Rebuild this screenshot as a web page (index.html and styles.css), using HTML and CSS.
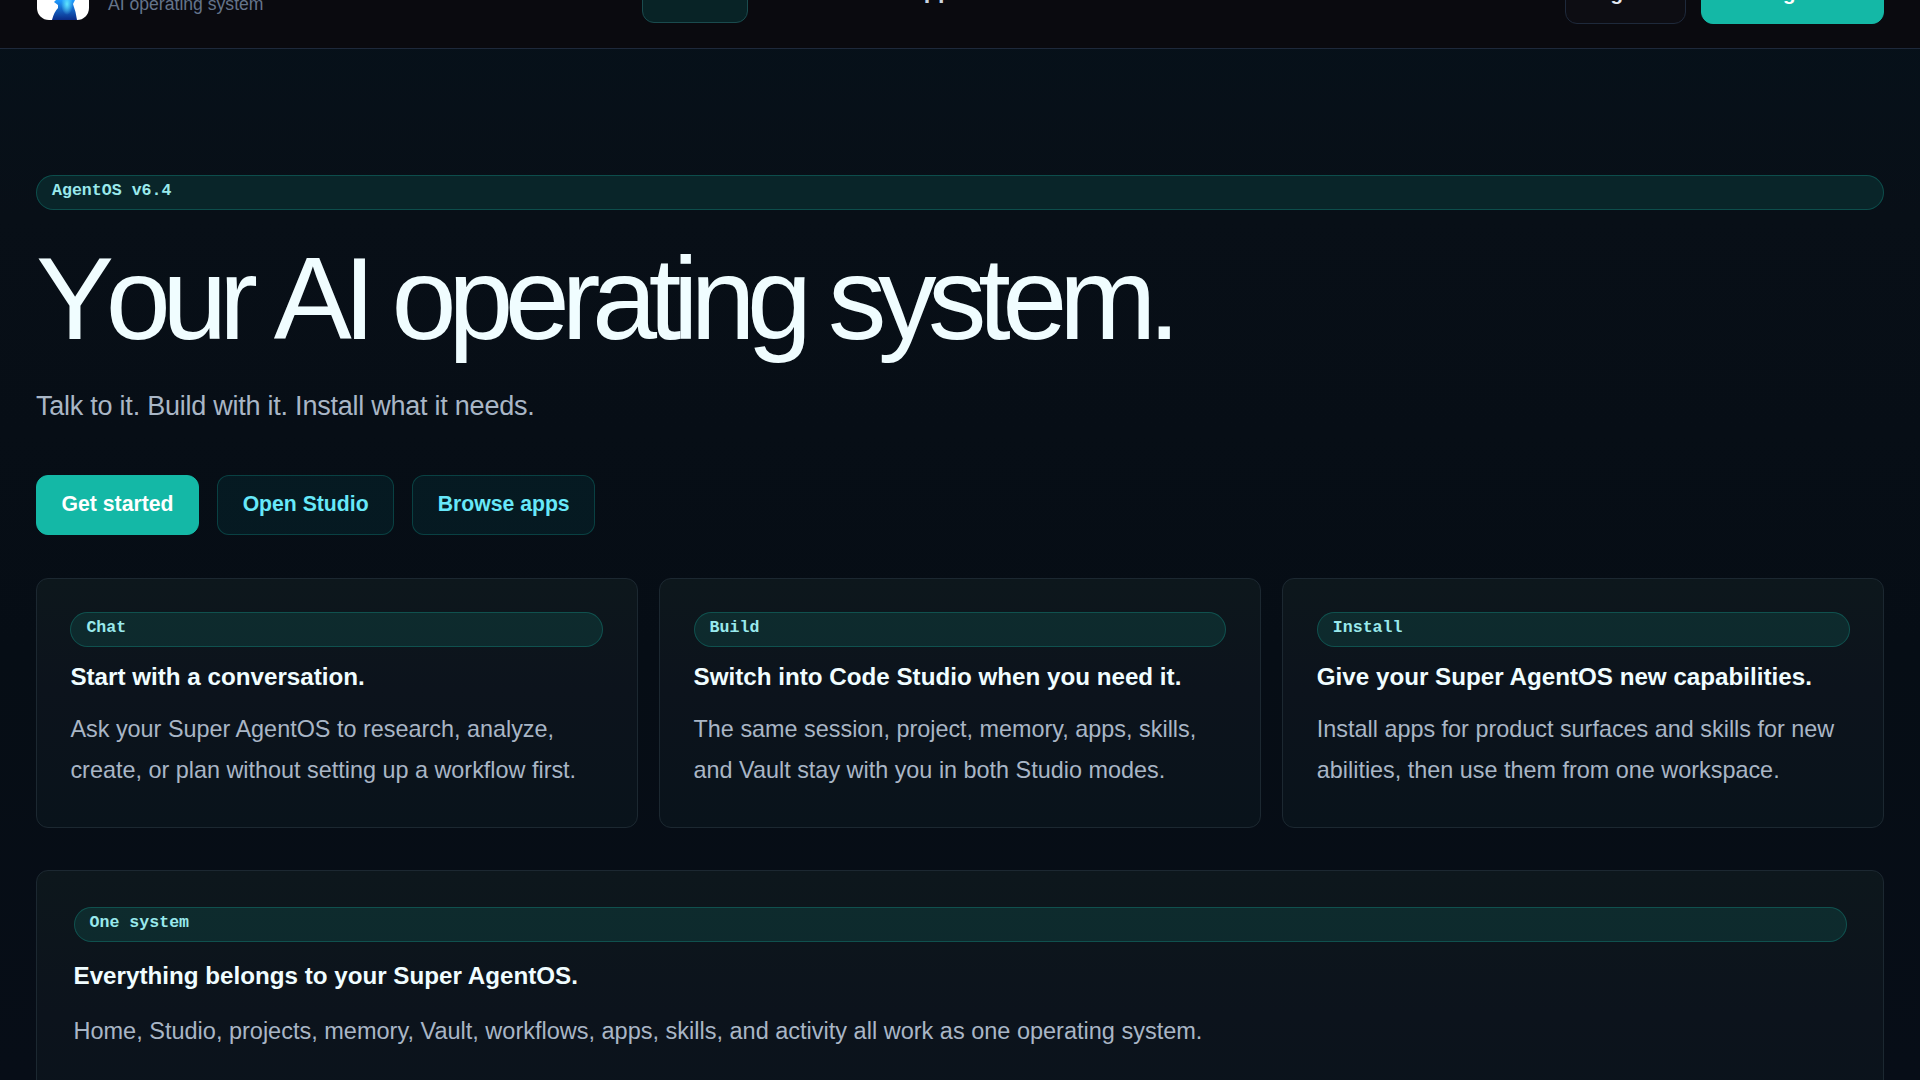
FILE: index.html
```html
<!DOCTYPE html>
<html lang="en">
<head>
  <meta charset="UTF-8">
  <meta name="viewport" content="width=device-width, initial-scale=1.0">
  <title>AgentOS</title>
  <link rel="stylesheet" href="styles.css">
</head>
<body>
  <header class="nav">
    <a class="brand" href="#">
      <svg class="brand-logo" viewBox="0 0 52 52">
        <defs>
          <linearGradient id="body" x1="0" y1="0" x2="0" y2="1">
            <stop offset="0.55" stop-color="#1e9bff"/>
            <stop offset="1" stop-color="#0a2a86"/>
          </linearGradient>
          <radialGradient id="glow" cx="0.5" cy="0.5" r="0.5">
            <stop offset="0" stop-color="#5fe6ff"/>
            <stop offset="1" stop-color="#5fe6ff" stop-opacity="0"/>
          </radialGradient>
        </defs>
        <rect width="52" height="52" fill="#fff"/>
        <path d="M18 8h20v24l-2 4q3 8 4 16H15q2-8 6-12v-3l-4-3 3-3z" fill="url(#body)"/>
        <ellipse cx="30" cy="36" rx="6" ry="11" fill="url(#glow)"/>
      </svg>
      <span class="brand-text">
        <small>AI operating system</small>
      </span>
    </a>
    <nav class="nav-links">
      <a class="active" href="#">Home</a>
      <a href="#">Studio</a>
      <a href="#">Apps</a>
      <a href="#">Skills</a>
      <a href="#">Docs</a>
    </nav>
    <div class="nav-actions">
      <a class="nav-button" href="#">Sign in</a>
      <a class="nav-button primary" href="#">Get AgentOS</a>
    </div>
  </header>

  <main class="page">
    <section class="hero">
      <div class="pill">AgentOS v6.4</div>
      <h1>Your AI operating system.</h1>
      <p class="lead">Talk to it. Build with it. Install what it needs.</p>
      <div class="actions">
        <a class="button primary" href="#">Get started</a>
        <a class="button" href="#">Open Studio</a>
        <a class="button" href="#">Browse apps</a>
      </div>
    </section>

    <section class="cards">
      <article class="card">
        <div class="pill">Chat</div>
        <h2>Start with a conversation.</h2>
        <p>Ask your Super AgentOS to research, analyze, create, or plan without setting up a workflow first.</p>
      </article>
      <article class="card">
        <div class="pill">Build</div>
        <h2>Switch into Code Studio when you need it.</h2>
        <p>The same session, project, memory, apps, skills, and Vault stay with you in both Studio modes.</p>
      </article>
      <article class="card">
        <div class="pill">Install</div>
        <h2>Give your Super AgentOS new capabilities.</h2>
        <p>Install apps for product surfaces and skills for new abilities, then use them from one workspace.</p>
      </article>
    </section>

    <section class="card panel">
      <div class="pill">One system</div>
      <h2>Everything belongs to your Super AgentOS.</h2>
      <p>Home, Studio, projects, memory, Vault, workflows, apps, skills, and activity all work as one operating system.</p>
    </section>
  </main>
</body>
</html>
```

FILE: styles.css
```css
* {
    box-sizing: border-box;
}

body {
    margin: 0;
    height: 100vh;
    overflow: hidden;
    display: flex;
    flex-direction: column;
    font-family: Helvetica, "Liberation Sans", Arial, sans-serif;
    color: #f0fdff;
    background: linear-gradient(180deg, #06111a 0%, #080f17 20%, #060d15 60%, #070d17 100%);
}

a {
    color: inherit;
    text-decoration: none;
}

/* top bar, scrolled partly out of view */
.nav {
    flex: none;
    display: flex;
    align-items: flex-end;
    justify-content: space-between;
    height: 49px;
    padding: 0 36px 24px 37px;
    background: #0a0a0f;
    border-bottom: 1px solid #1e293b;
}

.brand {
    display: flex;
    align-items: flex-end;
    gap: 19px;
    width: 605px;
    margin-bottom: 4px;
}

.brand-logo {
    width: 52px;
    height: 52px;
    border-radius: 12px;
}

.brand-text {
    display: flex;
    margin-bottom: 6px;
}

.brand-text small {
    font-size: 17.6px;
    line-height: 20px;
    color: #64748b;
}

.nav-links {
    display: flex;
    flex: 1;
    gap: 11.7px;
    margin-bottom: 1px;
}

.nav-links a {
    padding: 10px 19.6px 20px;
    border: 1px solid transparent;
    border-radius: 12px;
    font-size: 23.5px;
    font-weight: bold;
    line-height: 24px;
    color: #cbd5e1;
}

.nav-links .active {
    color: #5eead4;
    background: #082326;
    border-color: #1a4b4e;
}

.nav-actions {
    display: flex;
    gap: 15px;
}

.nav-button {
    padding: 12px 25.3px 18px;
    border: 1px solid #1e293b;
    border-radius: 12px;
    font-size: 20.5px;
    font-weight: bold;
    line-height: 24px;
    color: #e2e8f0;
    background: #0d0d13;
}

.nav-button.primary {
    padding-left: 27.2px;
    padding-right: 27.2px;
    color: #fff;
    background: #14b8a6;
    border-color: #14b8a6;
}

.page {
    padding: 126px 36px 0;
}

.pill {
    height: 35px;
    padding: 5.5px 15px;
    border: 1px solid rgba(20, 184, 166, 0.28);
    border-radius: 18px;
    background: rgba(20, 184, 166, 0.13);
    color: #99e9ec;
    font-family: "Liberation Mono", monospace;
    font-size: 16.6px;
    font-weight: bold;
    line-height: 18px;
}

h1 {
    margin: 34px 0 0;
    font-size: 117px;
    font-weight: normal;
    font-kerning: none;
    line-height: 110px;
    letter-spacing: -8.4px;
}

.lead {
    margin: 32px 0 0;
    font-size: 27px;
    line-height: 40px;
    letter-spacing: -0.24px;
    color: #a9b6c6;
}

.actions {
    display: flex;
    gap: 18px;
    margin-top: 49px;
}

.button {
    height: 60px;
    padding: 16px 24.6px;
    border: 1px solid rgba(20, 184, 166, 0.25);
    border-radius: 12px;
    background: rgba(6, 182, 180, 0.08);
    color: #67e8f9;
    font-size: 21.2px;
    font-weight: bold;
    line-height: 24px;
}

.button.primary {
    color: #fff;
    background: #14b8a6;
    border-color: #14b8a6;
}

.cards {
    display: grid;
    grid-template-columns: repeat(3, 1fr);
    gap: 21.6px;
    margin-top: 43px;
}

.card {
    height: 250px;
    padding: 33px 33.4px;
    border: 1px solid #1c2831;
    border-radius: 12px;
    background: linear-gradient(180deg, #0d171c 0%, #0c131c 45%, #09131b 100%);
}

.card h2 {
    margin: 15px 0 0;
    font-size: 24.2px;
    line-height: 30px;
}

.card p {
    margin: 17px 0 0;
    font-size: 23.4px;
    line-height: 40.6px;
    color: #a9b6c6;
}

/* runs on below the fold */
.panel {
    height: 320px;
    margin-top: 42px;
    padding: 36px 36.5px;
}

.panel h2 {
    margin-top: 19px;
}

.panel p {
    margin-top: 20px;
    font-size: 23.5px;
}
```
